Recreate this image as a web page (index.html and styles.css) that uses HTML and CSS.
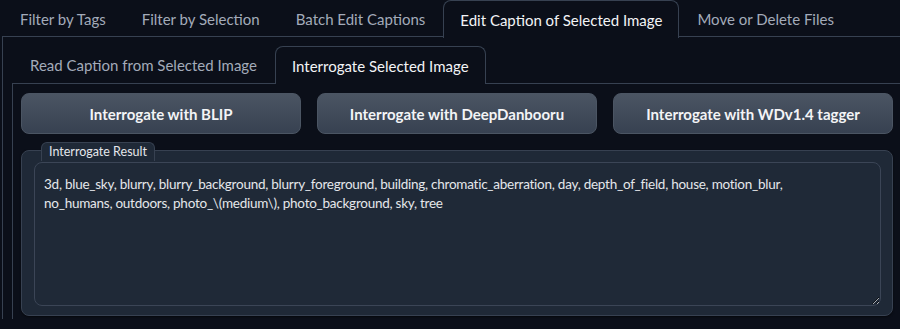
FILE: index.html
```html
<!DOCTYPE html>
<html>
<head>
<meta charset="utf-8">
<link rel="stylesheet" href="styles.css">
</head>
<body>
<div class="app">
  <div class="tabs outer">
    <div class="tab-nav">
      <button class="tab">Filter by Tags</button>
      <button class="tab">Filter by Selection</button>
      <button class="tab">Batch Edit Captions</button>
      <button class="tab selected">Edit Caption of Selected Image</button>
      <button class="tab">Move or Delete Files</button>
    </div>
    <div class="tab-panel outer-panel">
      <div class="tabs inner">
        <div class="tab-nav">
          <button class="tab">Read Caption from Selected Image</button>
          <button class="tab selected">Interrogate Selected Image</button>
        </div>
        <div class="tab-panel inner-panel">
          <div class="btn-row">
            <button class="btn">Interrogate with BLIP</button>
            <button class="btn">Interrogate with DeepDanbooru</button>
            <button class="btn">Interrogate with WDv1.4 tagger</button>
          </div>
          <div class="block">
            <span class="block-label">Interrogate Result</span>
            <textarea class="result" spellcheck="false">3d, blue_sky, blurry, blurry_background, blurry_foreground, building, chromatic_aberration, day, depth_of_field, house, motion_blur, no_humans, outdoors, photo_\(medium\), photo_background, sky, tree</textarea>
          </div>
        </div>
      </div>
    </div>
  </div>
</div>
</body>
</html>
```
FILE: styles.css
```css
html, body {
  margin: 0;
  padding: 0;
  background: #0b0f19;
  overflow: hidden;
  height: 329px;
}
body {
  font-family: "Lato", "Liberation Sans", sans-serif;
  color: #e5e7eb;
}
.app {
  width: 920px;
  padding-left: 2px;
}
.tab-nav {
  display: flex;
  border-bottom: 1px solid #374151;
  height: 37px;
  box-sizing: border-box;
}
.tab {
  font-family: inherit;
  font-size: 15px;
  color: #a3abb9;
  background: transparent;
  border: 1px solid transparent;
  border-bottom: none;
  border-radius: 8px 8px 0 0;
  padding: 0 17px;
  margin-bottom: -1px;
  height: 37px;
  cursor: pointer;
}
.tab.selected {
  color: #f3f4f6;
  background: #0b0f19;
  border-color: #374151;
  height: 38px;
  padding: 0 16px;
}
.outer-panel {
  border-left: 1px solid #374151;
  padding: 9px 0 0 9px;
}
.inner .tab-nav {
  height: 38px;
}
.inner .tab.selected {
  height: 38px;
}
.inner-panel {
  border-left: 1px solid #374151;
  padding: 9px 0 0 8px;
  height: 226px;
}
.btn-row {
  display: flex;
  gap: 16px;
  width: 872px;
}
.btn {
  flex: 1;
  height: 41px;
  font-family: inherit;
  font-size: 15px;
  font-weight: 700;
  color: #f3f4f6;
  background: linear-gradient(to bottom, #4b5563, #374151);
  border: 1px solid #4b5563;
  border-radius: 8px;
}
.block {
  position: relative;
  width: 872px;
  box-sizing: border-box;
  margin-top: 16px;
  background: #1f2937;
  border: 1px solid #374151;
  border-radius: 8px;
  padding: 11px 11px 9px 12px;
  box-shadow: 0 1px 2px rgba(0,0,0,0.5);
}
.block-label {
  position: absolute;
  left: 19px;
  top: -9px;
  font-size: 12.5px;
  padding: 1px 7px 2px;
  background: #1f2937;
  border: 1px solid #374151;
  border-bottom: none;
  border-radius: 6px 6px 0 0;
  color: #e5e7eb;
}
.result {
  display: block;
  width: 100%;
  height: 144px;
  box-sizing: border-box;
  background: #1f2937;
  border: 1px solid #3b4556;
  border-radius: 8px;
  color: #e5e7eb;
  font-family: inherit;
  font-size: 13.5px;
  letter-spacing: -0.25px;
  line-height: 19px;
  padding: 12px 34px 12px 9px;
  resize: vertical;
  outline: none;
}
```
